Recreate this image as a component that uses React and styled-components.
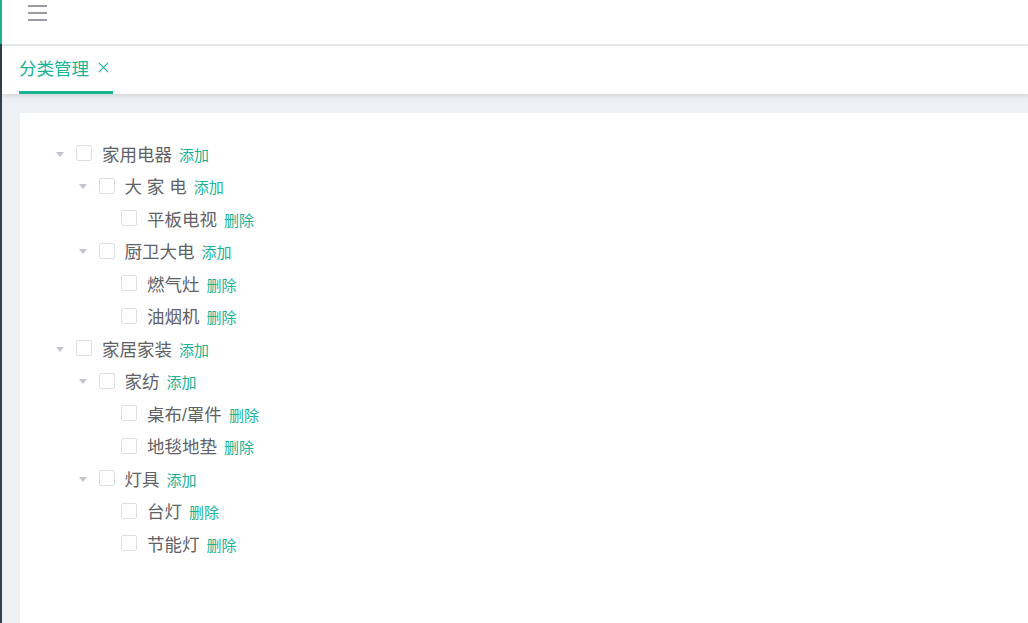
import styled, { createGlobalStyle } from "styled-components";
import React from "react";

const GlobalStyle = createGlobalStyle`
  html, body {
    margin: 0;
    padding: 0;
    height: 100%;
    overflow: hidden;
    font-family: "Liberation Sans", "Noto Sans CJK SC", sans-serif;
    background: #fff;
  }
  #root { height: 100%; }
`;

const tree = [
  {
    label: "家用电器",
    children: [
      { label: "大 家 电", children: [{ label: "平板电视" }] },
      { label: "厨卫大电", children: [{ label: "燃气灶" }, { label: "油烟机" }] },
    ],
  },
  {
    label: "家居家装",
    children: [
      { label: "家纺", children: [{ label: "桌布/罩件" }, { label: "地毯地垫" }] },
      { label: "灯具", children: [{ label: "台灯" }, { label: "节能灯" }] },
    ],
  },
];

const TreeNode = ({ node, level }) => {
  const hasChildren = !!node.children;
  return (
    <>
      <Row level={level}>
        <Caret visible={hasChildren} />
        <Check />
        <Label>{node.label}</Label>
        <Action>{hasChildren ? "添加" : "删除"}</Action>
      </Row>
      {hasChildren &&
        node.children.map((c) => <TreeNode key={c.label} node={c} level={level + 1} />)}
    </>
  );
};

const App = () => {
  return (
    <>
      <GlobalStyle />
      <Page>
        <Sidebar>
          <SideTop />
        </Sidebar>
        <Main>
          <TopBar>
            <Burger>
              <span />
              <span />
              <span />
            </Burger>
          </TopBar>
          <TabBar>
            <Tab>
              分类管理
              <Close viewBox="0 0 12 12">
                <path d="M1 1 L11 11 M11 1 L1 11" stroke="#1ab394" strokeWidth="1.2" fill="none" />
              </Close>
            </Tab>
          </TabBar>
          <Content>
            <Card>
              {tree.map((n) => (
                <TreeNode key={n.label} node={n} level={0} />
              ))}
            </Card>
          </Content>
        </Main>
      </Page>
    </>
  );
};

export default App;

const Page = styled.div`
  display: flex;
  height: 100vh;
`;

const Sidebar = styled.div`
  width: 2px;
  flex-shrink: 0;
  background: #2f4050;
`;

const SideTop = styled.div`
  height: 44px;
  background: #1ab394;
`;

const Main = styled.div`
  flex: 1;
  display: flex;
  flex-direction: column;
  min-width: 0;
`;

const TopBar = styled.div`
  height: 44px;
  background: #fff;
  border-bottom: 2px solid #e7eaec;
  display: flex;
  align-items: flex-start;
  padding-left: 26px;
`;

const Burger = styled.div`
  width: 19px;
  padding-top: 5px;
  display: flex;
  flex-direction: column;
  gap: 5px;
  span {
    display: block;
    height: 2px;
    background: #999ca1;
  }
`;

const TabBar = styled.div`
  height: 48px;
  background: #fff;
  box-shadow: 0 2px 4px rgba(0, 0, 0, 0.12);
  padding-left: 17px;
  display: flex;
  position: relative;
  z-index: 1;
`;

const Tab = styled.div`
  height: 48px;
  box-sizing: border-box;
  border-bottom: 3px solid #1ab394;
  color: #1ab394;
  font-size: 17.5px;
  display: flex;
  align-items: center;
  padding-bottom: 3px;
  width: 94px;
`;

const Close = styled.svg`
  width: 11px;
  height: 11px;
  margin-left: 9px;
`;

const Content = styled.div`
  flex: 1;
  background: #eef1f3;
  padding: 19px 0 0 18px;
  display: flex;
`;

const Card = styled.div`
  flex: 1;
  background: #fff;
  padding: 24px 0 0 34px;
`;

const Row = styled.div`
  display: flex;
  align-items: center;
  height: 32.5px;
  padding-left: ${(p) => p.level * 22.5}px;
`;

const Caret = styled.span`
  width: 0;
  height: 0;
  border-left: 4.5px solid transparent;
  border-right: 4.5px solid transparent;
  border-top: 5px solid ${(p) => (p.visible ? "#c0c4cc" : "transparent")};
  margin: 2px 12px 0 2px;
`;

const Check = styled.span`
  width: 14px;
  height: 14px;
  border: 1px solid #dcdfe6;
  border-radius: 2px;
  box-sizing: content-box;
  margin-right: 10px;
`;

const Label = styled.span`
  font-size: 17.5px;
  color: #606266;
`;

const Action = styled.span`
  font-size: 15px;
  color: #1ab394;
  margin-left: 7px;
  margin-top: 2px;
`;
